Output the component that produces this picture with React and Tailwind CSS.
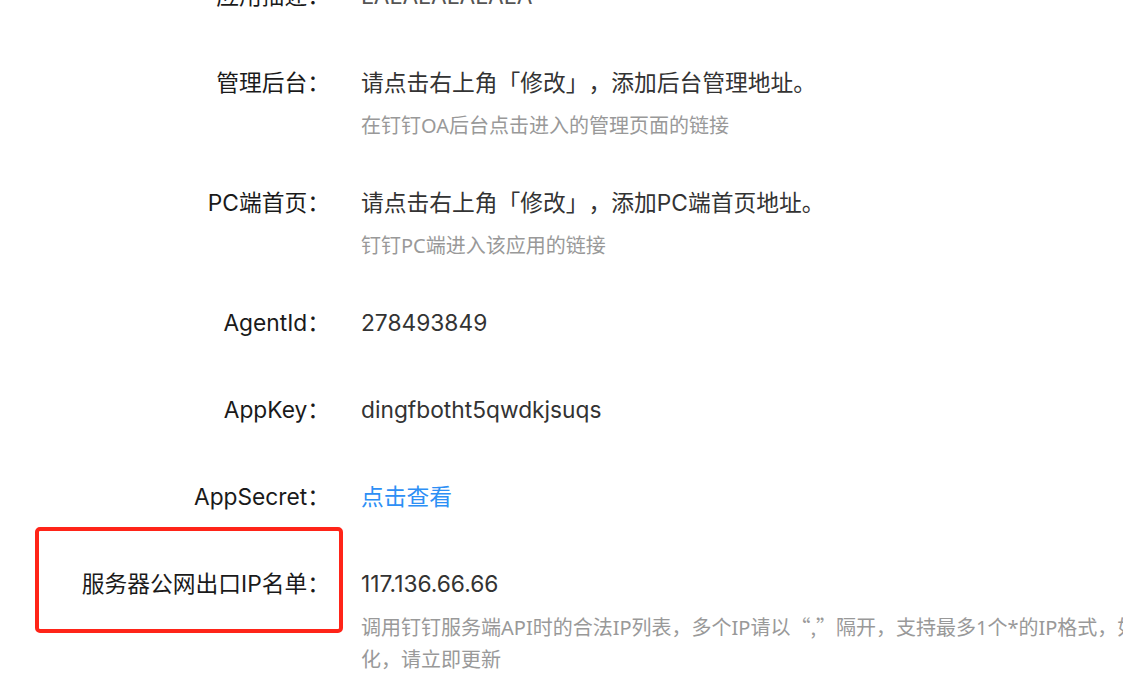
import React from "react";

const font = { fontFamily: '"Inter", "Noto Sans CJK SC", sans-serif' };
const hintFont = { fontFamily: '"Noto Sans", "Noto Sans CJK SC", sans-serif' };

function Row({ label, children, hint, extra }) {
  return (
    <div className="relative flex pb-[35px]">
      {extra}
      <div className="w-[330px] shrink-0 text-right text-[22.75px] leading-[52px] text-[#1a1a1a] [text-spacing-trim:space-all]">
        {label}
      </div>
      <div className="ml-[31px] min-w-0">
        <div className="text-[22.75px] leading-[52px] text-[#333333] whitespace-nowrap [text-spacing-trim:space-all]">
          {children}
        </div>
        {hint && (
          <div
            className="mt-[1px] text-[20px] leading-[32px] text-[#999999] whitespace-nowrap [text-spacing-trim:space-all]"
            style={hintFont}
          >
            {hint}
          </div>
        )}
      </div>
    </div>
  );
}

export default function App() {
  return (
    <div className="w-[1123px] h-[685px] overflow-hidden bg-white" style={font}>
      <div className="-mt-[30px]">
        <Row label="应用描述：">
          <span className="text-[#555555]">LALALALALALA</span>
        </Row>
        <Row label="管理后台：" hint="在钉钉OA后台点击进入的管理页面的链接">
          请点击右上角「修改」，添加后台管理地址。
        </Row>
        <Row label="PC端首页：" hint="钉钉PC端进入该应用的链接">
          请点击右上角「修改」，添加PC端首页地址。
        </Row>
        <Row label="AgentId：">278493849</Row>
        <Row label="AppKey：">dingfbotht5qwdkjsuqs</Row>
        <Row label="AppSecret：">
          <span className="text-[#2d8ff5] cursor-pointer">点击查看</span>
        </Row>
        <Row
          label="服务器公网出口IP名单："
          extra={
            <div className="absolute left-[35px] top-[-31px] w-[308px] h-[106px] rounded-[5px] border-[4px] border-[#ff2418] pointer-events-none" />
          }
          hint={
            <>
              调用钉钉服务端API时的合法IP列表，多个IP请以
              <span style={{ fontFamily: '"Noto Sans CJK SC", sans-serif' }}>“,”</span>
              隔开，支持最多1个*的IP格式，如服务器IP有变
              <br />
              化，请立即更新
            </>
          }
        >
          117.136.66.66
        </Row>
      </div>
    </div>
  );
}
